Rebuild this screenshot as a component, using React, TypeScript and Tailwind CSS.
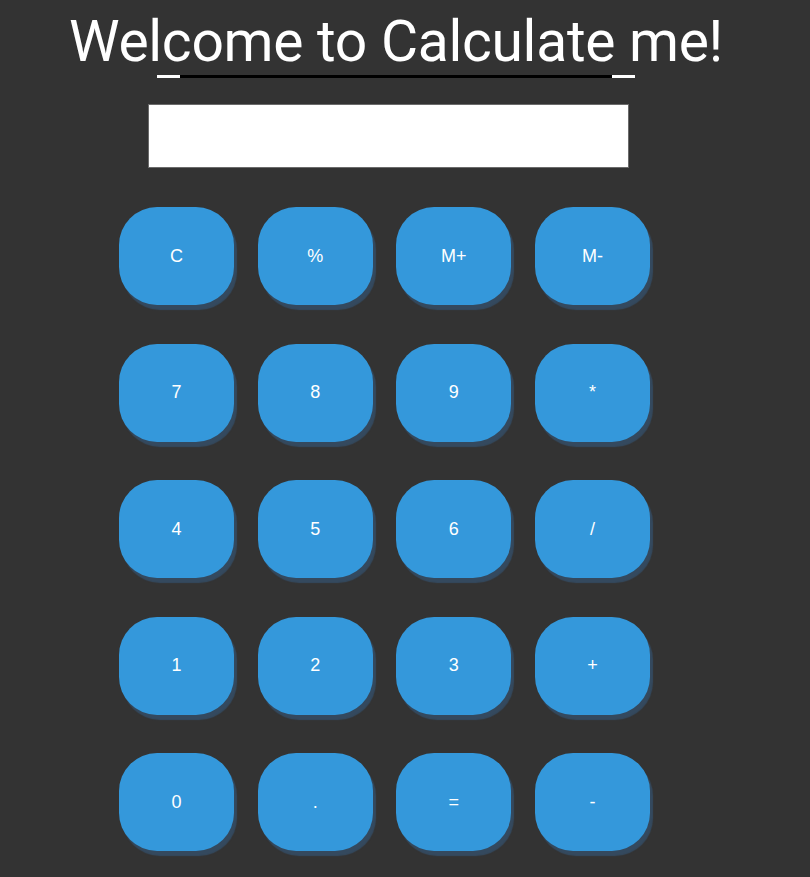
const keys = ['C', '%', 'M+', 'M-', '7', '8', '9', '*', '4', '5', '6', '/', '1', '2', '3', '+', '0', '.', '=', '-'];

export default function App() {
  return (
    <div className="min-h-[877px] w-full bg-[#333333]">
      <div className="w-[792px]">
        <h1 className="pt-[13px] text-center font-['Roboto',sans-serif] text-[57px] leading-none font-normal tracking-[-0.3px] text-white">
          Welcome to Calculate me!
        </h1>
        <div className="ml-[157px] mt-[5px] flex h-[3px] w-[478px]">
          <div className="w-[23px] bg-white" />
          <div className="flex-1 bg-black" />
          <div className="w-[23px] bg-white" />
        </div>
        <input
          type="text"
          className="ml-[148px] mt-[26px] block h-[64px] w-[481px] border border-[#6b6b6b] bg-white outline-none"
        />
        <div className="ml-[119px] mt-[39px] grid grid-cols-[repeat(4,115px)] gap-x-[23.7px] gap-y-[38.5px] pb-[20px]">
          {keys.map((k) => (
            <button
              key={k}
              className="h-[98px] rounded-[38px] bg-[#3498db] font-['Liberation_Sans',Arial,sans-serif] text-[18px] text-white shadow-[3px_5px_1px_#34495e]"
            >
              {k}
            </button>
          ))}
        </div>
      </div>
    </div>
  );
}
